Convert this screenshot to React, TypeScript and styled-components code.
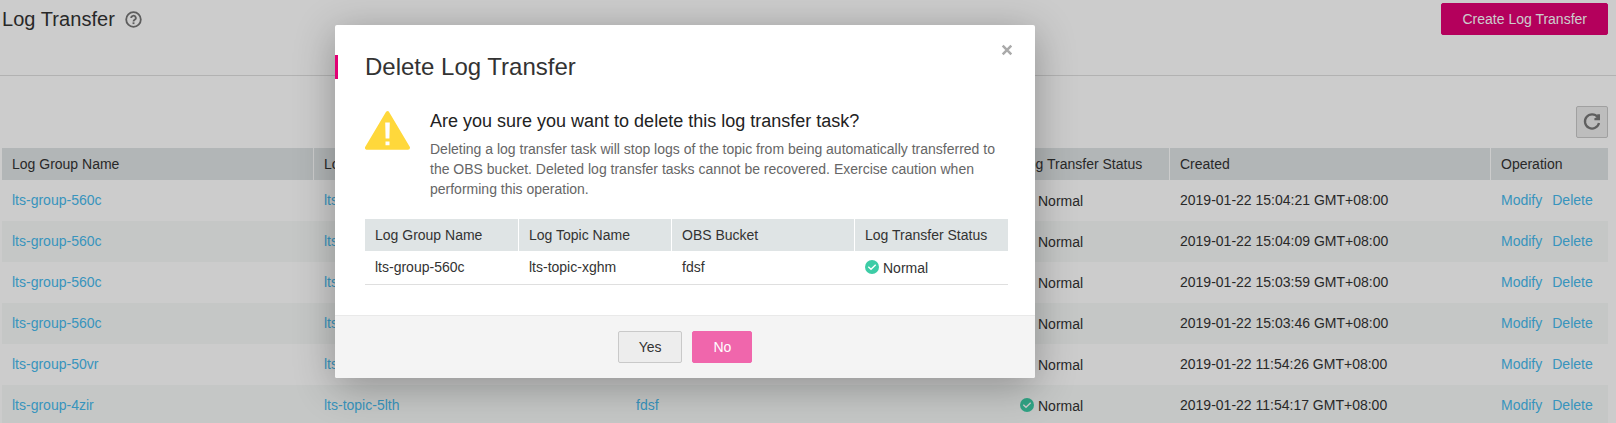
import React from "react";
import styled, { createGlobalStyle, css } from "styled-components";

const GlobalStyle = createGlobalStyle`
  * { box-sizing: border-box; }
  body {
    margin: 0;
    overflow: hidden;
    background: #fff;
    color: #333;
    font: 14px/20px "Liberation Sans", Arial, sans-serif;
  }
`;

const Page = styled.div`
  position: relative;
  height: 423px;
  overflow: hidden;
`;

const PageHeader = styled.header`
  display: flex;
  justify-content: space-between;
  align-items: flex-start;
  height: 76px;
  padding: 3px 8px 0 2px;
  border-bottom: 1px solid #dfdfdf;
`;

const TitleGroup = styled.div`
  display: flex;
  align-items: center;
  gap: 10px;
  height: 32px;
`;

const PageTitle = styled.h1`
  margin: 0;
  font-size: 20px;
  line-height: 32px;
  font-weight: 400;
  letter-spacing: 0.06px;
`;

const Button = styled.button<{ $kind: "primary" | "soft" | "plain" }>`
  height: 32px;
  padding: 0 20px;
  border: 1px solid;
  border-radius: 2px;
  font: inherit;
  ${({ $kind }) =>
    $kind === "primary"
      ? css`background: #e20074; border-color: #e20074; color: #fff;`
      : $kind === "soft"
      ? css`background: #f066ac; border-color: #f066ac; color: #fff;`
      : css`background: #ededed; border-color: #c9c9c9; color: #333;`}
`;

const Toolbar = styled.div`
  display: flex;
  justify-content: flex-end;
  padding: 30px 8px 10px;
`;

const IconButton = styled.button`
  display: grid;
  place-items: center;
  width: 32px;
  height: 32px;
  padding: 0;
  border: 1px solid #c9c9c9;
  border-radius: 2px;
  background: #ededed;
`;

const Grid = styled.table<{ $width: number }>`
  width: ${(p) => p.$width}px;
  table-layout: fixed;
  border-collapse: separate;
  border-spacing: 0;
`;

const HeadCell = styled.th`
  height: 32px;
  padding: 0 10px;
  border-right: 1px solid #fff;
  background: #dfe4e5;
  font-weight: 400;
  text-align: left;
  white-space: nowrap;
  &:last-child { border-right: 0; }
`;

const Cell = styled.td`
  padding: 10px 10px 0;
  vertical-align: top;
  white-space: nowrap;
`;

const TaskTable = styled(Grid)`
  margin-left: 2px;
  tbody tr { height: 41px; }
  tbody tr:nth-child(even) { background: #f7f9f8; }
`;

const SummaryTable = styled(Grid)`
  margin-top: 20px;
  td {
    height: 34px;
    padding-top: 6px;
    border-bottom: 1px solid #dfdfdf;
  }
`;

const Link = styled.a`
  color: #47b9ed;
  text-decoration: none;
  & + & { margin-left: 10px; }
`;

const StatusLine = styled.span`
  display: flex;
  align-items: flex-start;
  gap: 4px;
  padding-top: 1px;
  svg { margin-top: 2px; }
`;

const Overlay = styled.div`
  position: absolute;
  inset: 0;
  padding-top: 25px;
  padding-left: 335px;
  background: rgba(0, 0, 0, 0.2);
`;

const Dialog = styled.section`
  width: 700px;
  height: 353px;
  display: flex;
  flex-direction: column;
  overflow: hidden;
  border-radius: 2px;
  background: #fff;
  box-shadow: 0 8px 40px rgba(0, 0, 0, 0.3);
`;

const DialogHeader = styled.header`
  display: flex;
  justify-content: space-between;
  align-items: flex-start;
  height: 86px;
  padding: 19px 22px 0 0;
`;

const DialogTitle = styled.h2`
  margin: 11px 0 0;
  padding-left: 27px;
  border-left: 3px solid #e20074;
  font-size: 24px;
  line-height: 24px;
  height: 24px;
  font-weight: 400;
`;

const CloseButton = styled.button`
  display: grid;
  padding: 0;
  border: 0;
  background: none;
`;

const DialogBody = styled.div`
  flex: 1;
  padding: 0 27px 0 30px;
`;

const Warning = styled.div`
  display: flex;
  align-items: flex-start;
  gap: 20px;
`;

const Question = styled.h3`
  margin: 0 0 7px;
  font-size: 18px;
  line-height: 21px;
  font-weight: 400;
  color: #222;
`;

const Explanation = styled.p`
  margin: 0;
  width: 578px;
  color: #666;
`;

const DialogFooter = styled.footer`
  display: flex;
  justify-content: center;
  gap: 10px;
  height: 63px;
  padding-top: 15px;
  border-top: 1px solid #e9e9e9;
  background: #f4f4f4;
`;

const HelpIcon = () => (
  <svg width="17" height="17" viewBox="0 0 17 17" fill="none" stroke="#757575">
    <circle cx="8.5" cy="8.5" r="7.3" strokeWidth="1.8" />
    <path d="M6.2 7a2.3 2.2 0 1 1 3.5 1.8c-.8.5-1.2.8-1.2 1.6" strokeWidth="1.8" />
    <path d="M8.5 11.3v1.8" strokeWidth="1.9" />
  </svg>
);

const RefreshIcon = () => (
  <svg width="18" height="18" viewBox="0 0 18 18" fill="none">
    <path d="M14.7 4.1A7.1 7.1 0 1 0 16 10" stroke="#777" strokeWidth="2.3" />
    <path d="M17 1.2V7.2h-5.6V5.2L14.2 4V1.2z" fill="#777" />
  </svg>
);

const CheckIcon = () => (
  <svg width="14" height="14" viewBox="0 0 14 14">
    <circle cx="7" cy="7" r="7" fill="#3dcca6" />
    <path d="M3.3 6.8l2.7 2.5 4.7-4.5" fill="none" stroke="#fff" strokeWidth="1.4" />
  </svg>
);

const WarningIcon = () => (
  <svg width="45" height="39" viewBox="0 0 45 39">
    <path d="M22.5 2.2L2 36.8h41z" fill="#ffd83b" stroke="#ffd83b" strokeWidth="4" strokeLinejoin="round" />
    <path d="M20.2 11.5h4.6L24.4 27.5h-3.8zM20.5 30.5h4V34.3h-4z" fill="#fff" />
  </svg>
);

const CloseIcon = () => (
  <svg width="12" height="12" viewBox="0 0 12 12">
    <path d="M1.7 1.7l8.6 8.6M10.3 1.7l-8.6 8.6" stroke="#aaa" strokeWidth="2.5" />
  </svg>
);

const Status = () => (
  <StatusLine>
    <CheckIcon />
    Normal
  </StatusLine>
);

const tasks = [
  { group: "lts-group-560c", topic: "lts-topic-xghm", created: "2019-01-22 15:04:21 GMT+08:00" },
  { group: "lts-group-560c", topic: "lts-topic-xghm", created: "2019-01-22 15:04:09 GMT+08:00" },
  { group: "lts-group-560c", topic: "lts-topic-xghm", created: "2019-01-22 15:03:59 GMT+08:00" },
  { group: "lts-group-560c", topic: "lts-topic-xghm", created: "2019-01-22 15:03:46 GMT+08:00" },
  { group: "lts-group-50vr", topic: "lts-topic-xghm", created: "2019-01-22 11:54:26 GMT+08:00" },
  { group: "lts-group-4zir", topic: "lts-topic-5lth", created: "2019-01-22 11:54:17 GMT+08:00" },
];

const Columns = ({ widths }: { widths: number[] }) => (
  <colgroup>
    {widths.map((w, i) => (
      <col key={i} width={w} />
    ))}
  </colgroup>
);

const Head = ({ labels }: { labels: string[] }) => (
  <thead>
    <tr>
      {labels.map((label) => (
        <HeadCell key={label}>{label}</HeadCell>
      ))}
    </tr>
  </thead>
);

export default function App() {
  return (
    <Page>
      <GlobalStyle />
      <PageHeader>
        <TitleGroup>
          <PageTitle>Log Transfer</PageTitle>
          <HelpIcon />
        </TitleGroup>
        <Button $kind="primary">Create Log Transfer</Button>
      </PageHeader>
      <Toolbar>
        <IconButton aria-label="Refresh">
          <RefreshIcon />
        </IconButton>
      </Toolbar>
      <TaskTable $width={1606}>
        <Columns widths={[312, 312, 384, 160, 321, 117]} />
        <Head labels={["Log Group Name", "Log Topic Name", "", "Log Transfer Status", "Created", "Operation"]} />
        <tbody>
          {tasks.map((task, i) => (
            <tr key={task.created}>
              <Cell><Link>{task.group}</Link></Cell>
              <Cell><Link>{task.topic}</Link></Cell>
              <Cell>{i === tasks.length - 1 && <Link>fdsf</Link>}</Cell>
              <Cell><Status /></Cell>
              <Cell>{task.created}</Cell>
              <Cell>
                <Link>Modify</Link>
                <Link>Delete</Link>
              </Cell>
            </tr>
          ))}
        </tbody>
      </TaskTable>
      <Overlay>
        <Dialog role="dialog" aria-label="Delete Log Transfer">
          <DialogHeader>
            <DialogTitle>Delete Log Transfer</DialogTitle>
            <CloseButton aria-label="Close">
              <CloseIcon />
            </CloseButton>
          </DialogHeader>
          <DialogBody>
            <Warning>
              <WarningIcon />
              <div>
                <Question>Are you sure you want to delete this log transfer task?</Question>
                <Explanation>
                  Deleting a log transfer task will stop logs of the topic from being automatically transferred to
                  the OBS bucket. Deleted log transfer tasks cannot be recovered. Exercise caution when
                  performing this operation.
                </Explanation>
              </div>
            </Warning>
            <SummaryTable $width={643}>
              <Columns widths={[154, 153, 183, 153]} />
              <Head labels={["Log Group Name", "Log Topic Name", "OBS Bucket", "Log Transfer Status"]} />
              <tbody>
                <tr>
                  <Cell>lts-group-560c</Cell>
                  <Cell>lts-topic-xghm</Cell>
                  <Cell>fdsf</Cell>
                  <Cell><Status /></Cell>
                </tr>
              </tbody>
            </SummaryTable>
          </DialogBody>
          <DialogFooter>
            <Button $kind="plain">Yes</Button>
            <Button $kind="soft">No</Button>
          </DialogFooter>
        </Dialog>
      </Overlay>
    </Page>
  );
}
